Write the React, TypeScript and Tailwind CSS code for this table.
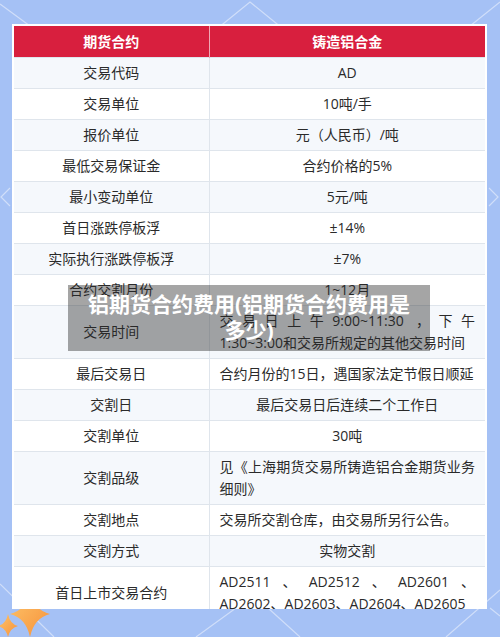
import React from "react";

type Row = { k: string; v: React.ReactNode; align?: "center" | "justify" };

const rows: Row[] = [
  { k: "交易代码", v: "AD" },
  { k: "交易单位", v: "10吨/手" },
  { k: "报价单位", v: "元（人民币）/吨" },
  { k: "最低交易保证金", v: "合约价格的5%" },
  { k: "最小变动单位", v: "5元/吨" },
  { k: "首日涨跌停板浮", v: "±14%" },
  { k: "实际执行涨跌停板浮", v: "±7%" },
  { k: "合约交割月份", v: "1~12月" },
  {
    k: "交易时间",
    v: (
      <>
        <span className="block [text-align-last:justify]">交易日上午9:00~11:30 ，下午</span>
        <span className="block">1:30~3:00和交易所规定的其他交易时间</span>
      </>
    ),
    align: "justify",
  },
  { k: "最后交易日", v: "合约月份的15日，遇国家法定节假日顺延", align: "justify" },
  { k: "交割日", v: "最后交易日后连续二个工作日" },
  { k: "交割单位", v: "30吨" },
  { k: "交割品级", v: "见《上海期货交易所铸造铝合金期货业务细则》", align: "justify" },
  { k: "交割地点", v: "交易所交割仓库，由交易所另行公告。", align: "justify" },
  { k: "交割方式", v: "实物交割" },
  { k: "首日上市交易合约", v: "AD2511、AD2512、AD2601、AD2602、AD2603、AD2604、AD2605", align: "justify" },
];

function Backdrop() {
  return (
    <svg className="absolute inset-0 h-full w-full" viewBox="0 0 500 637" fill="none">
      <g stroke="#dbe6fb" strokeWidth="1.2" opacity="0.8">
        <path d="M0 4 L30 26" />
        <path d="M218 28 L250 2 L282 28" />
        <path d="M470 26 L500 2" />
        <path d="M10 188 L1 197 L10 206" />
        <path d="M489 188 L498 197 L489 206" />
        <path d="M0 584 L54 637" />
        <path d="M196 637 L236 608" />
        <path d="M268 608 L300 637" />
        <path d="M446 637 L500 590" />
        <path d="M490 608 L500 616" />
      </g>
      <defs>
        <linearGradient id="st" x1="0" y1="0" x2="1" y2="1">
          <stop offset="0" stopColor="#fdc56b" />
          <stop offset="1" stopColor="#f7913a" />
        </linearGradient>
      </defs>
      <path d="M30 592 Q34 610 50 614 Q34 618 30 637 Q26 618 10 614 Q26 610 30 592 Z" fill="url(#st)" />
      <path d="M8 614 Q10 624 18 626 Q10 628 8 637 Q6 628 -2 626 Q6 624 8 614 Z" fill="url(#st)" />
    </svg>
  );
}

export default function App() {
  const font = { fontFamily: '"Open Sans", "Noto Sans CJK SC", sans-serif' };
  return (
    <div className="relative h-[637px] w-[500px] overflow-hidden bg-[#a5c1f5]" style={font}>
      <Backdrop />
      <div className="relative ml-[12px] mt-[24px] h-[585px] w-[475px] overflow-hidden bg-white p-[2px]">
        <table className="w-full table-fixed border-collapse text-[14px] text-[#2a2a2a]">
          <colgroup>
            <col className="w-[195px]" />
            <col />
          </colgroup>
          <thead>
            <tr className="h-[31px] bg-[#d81f3e] text-white">
              <th className="border-r border-[#f0a8b4] font-bold">期货合约</th>
              <th className="font-bold">铸造铝合金</th>
            </tr>
          </thead>
          <tbody>
            {rows.map((r, i) => (
              <tr key={r.k} className={i % 2 === 0 ? "bg-[#f5f8fc]" : "bg-white"}>
                <td className="border border-l-0 border-[#dfe5ec] py-[4px] text-center leading-[22px]">{r.k}</td>
                <td
                  className={
                    r.align === "justify"
                      ? "border border-r-0 border-[#dfe5ec] px-[10px] py-[4px] text-justify leading-[22px]"
                      : "border border-r-0 border-[#dfe5ec] px-[10px] py-[4px] text-center leading-[22px]"
                  }
                >
                  {r.v}
                </td>
              </tr>
            ))}
          </tbody>
        </table>
      </div>
      <div className="absolute left-[68px] top-[285px] w-[362px] bg-[rgba(40,40,40,0.42)] px-[10px] pb-[8px] pt-[6px] text-center text-[21px] font-bold leading-[26px] text-white">
        铝期货合约费用(铝期货合约费用是多少)
      </div>
    </div>
  );
}
